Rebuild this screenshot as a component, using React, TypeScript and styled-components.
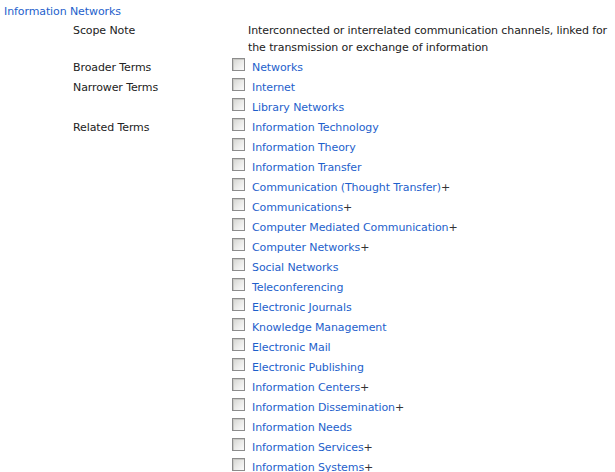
import { Fragment } from 'react';
import styled, { createGlobalStyle } from 'styled-components';

const Global = createGlobalStyle`
  html, body { overflow: hidden; }
  body {
    margin: 0;
    padding: 3px 4px;
    background: #fff;
    font-family: "DejaVu Sans", Verdana, sans-serif;
    font-size: 11px;
    letter-spacing: -0.1px;
    color: #222;
  }
`;

const Title = styled.a`
  display: block;
  line-height: 17px;
  color: #1e5fcc;
  text-decoration: none;
`;

const Terms = styled.div`
  display: grid;
  grid-template-columns: 159px 1fr;
  margin-top: 2px;
  padding-left: 69px;
`;

const Label = styled.div<{ $tight?: boolean }>`
  line-height: ${(p) => (p.$tight ? '17px' : '20px')};
`;

const Note = styled.div`
  line-height: 17px;
  padding: 0 0 2px 16px;
`;

const List = styled.ul`
  margin: 0;
  padding: 0;
  list-style: none;
`;

const Item = styled.li`
  line-height: 20px;
  white-space: nowrap;
`;

const Box = styled.input.attrs({ type: 'checkbox' })`
  appearance: none;
  display: inline-block;
  width: 13px;
  height: 13px;
  margin: 0 7px 0 0;
  vertical-align: baseline;
  box-sizing: border-box;
  border: 1px solid #8c8c8c;
  background: linear-gradient(135deg, #d4d4d0 0%, #ececea 55%, #fbfbfb 100%);
  box-shadow: inset 1px 1px 0 #c8c8c4;
`;

const TermLink = styled.a`
  color: #1e5fcc;
  text-decoration: none;
`;

const More = styled.span`
  color: #333;
`;

type Term = { name: string; more?: boolean };

const groups: { label: string; terms: Term[] }[] = [
  { label: 'Broader Terms', terms: [{ name: 'Networks' }] },
  { label: 'Narrower Terms', terms: [{ name: 'Internet' }, { name: 'Library Networks' }] },
  {
    label: 'Related Terms',
    terms: [
      { name: 'Information Technology' },
      { name: 'Information Theory' },
      { name: 'Information Transfer' },
      { name: 'Communication (Thought Transfer)', more: true },
      { name: 'Communications', more: true },
      { name: 'Computer Mediated Communication', more: true },
      { name: 'Computer Networks', more: true },
      { name: 'Social Networks' },
      { name: 'Teleconferencing' },
      { name: 'Electronic Journals' },
      { name: 'Knowledge Management' },
      { name: 'Electronic Mail' },
      { name: 'Electronic Publishing' },
      { name: 'Information Centers', more: true },
      { name: 'Information Dissemination', more: true },
      { name: 'Information Needs' },
      { name: 'Information Services', more: true },
      { name: 'Information Systems', more: true },
    ],
  },
];

export default function App() {
  return (
    <>
      <Global />
      <Title href="#">Information Networks</Title>
      <Terms>
        <Label $tight>Scope Note</Label>
        <Note>
          Interconnected or interrelated communication channels, linked for the
          transmission or exchange of information
        </Note>
        {groups.map((g) => (
          <Fragment key={g.label}>
            <Label>{g.label}</Label>
            <List>
              {g.terms.map((t) => (
                <Item key={t.name}>
                  <Box />
                  <TermLink href="#">{t.name}</TermLink>
                  {t.more ? <More>+</More> : null}
                </Item>
              ))}
            </List>
          </Fragment>
        ))}
      </Terms>
    </>
  );
}
